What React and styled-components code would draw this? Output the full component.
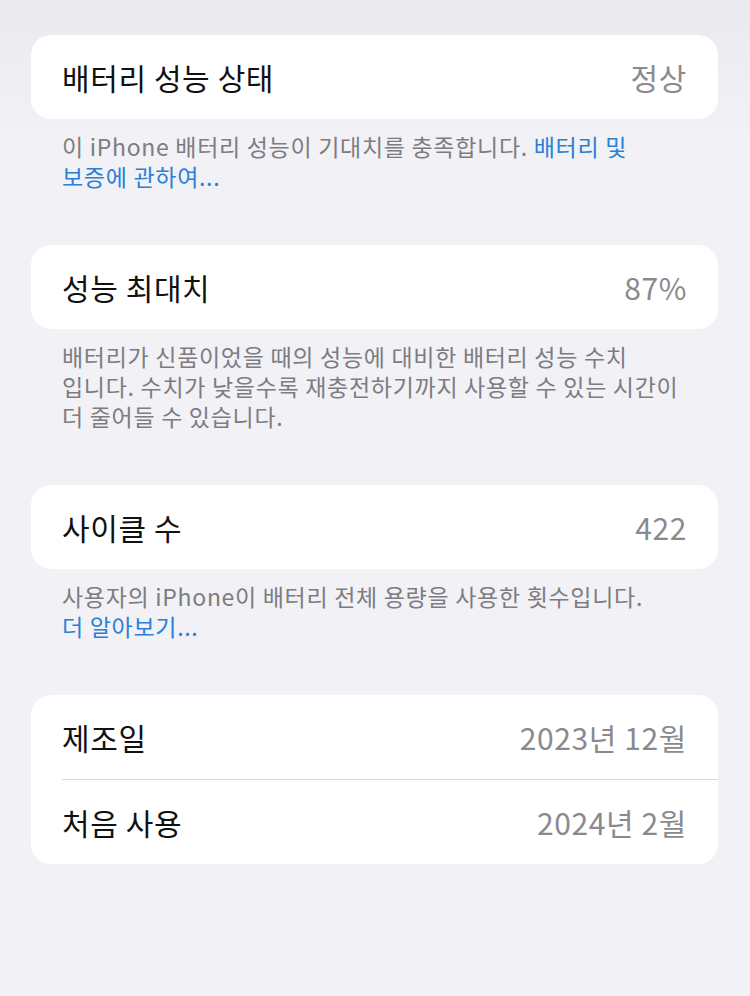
import React from 'react';
import styled, { createGlobalStyle } from 'styled-components';

const GlobalStyle = createGlobalStyle`
  html, body {
    margin: 0;
    padding: 0;
    background: #f1f1f6;
  }
  body {
    font-family: "Noto Sans CJK KR", "Noto Sans", sans-serif;
    -webkit-font-smoothing: antialiased;
  }
`;

const Page = styled.div`
  min-height: 996px;
  box-sizing: border-box;
  padding: 35px 32px 0 31px;
  background: linear-gradient(to bottom, #e9e9ee 0px, #f1f1f6 140px, #f1f1f6 100%);
`;

const Section = styled.section`
  margin-bottom: 54px;
`;

const Card = styled.div`
  background: #ffffff;
  border-radius: 20px;
  overflow: hidden;
`;

const Row = styled.div`
  display: flex;
  align-items: center;
  justify-content: space-between;
  height: 84px;
  padding: 0 31px;
  box-sizing: border-box;
`;

const Divider = styled.div`
  height: 1px;
  margin-left: 31px;
  background: #dcdce0;
`;

const Label = styled.span`
  font-size: 30px;
  color: #111111;
  letter-spacing: 0.6px;
`;

const Value = styled.span`
  font-size: 30px;
  color: #8a8a8e;
  letter-spacing: 0.6px;
`;

const Footer = styled.p`
  margin: 0;
  padding: 12px 31px 0 31px;
  font-size: 23px;
  line-height: 30px;
  color: #7c7c81;
  letter-spacing: 0.7px;
  white-space: nowrap;
`;

const Link = styled.a`
  color: #2a80d6;
  text-decoration: none;
`;

export default function App() {
  return (
    <>
      <GlobalStyle />
      <Page>
        <Section>
          <Card>
            <Row>
              <Label>배터리 성능 상태</Label>
              <Value>정상</Value>
            </Row>
          </Card>
          <Footer>
            이 iPhone 배터리 성능이 기대치를 충족합니다. <Link>배터리 및</Link>
            <br />
            <Link>보증에 관하여...</Link>
          </Footer>
        </Section>

        <Section>
          <Card>
            <Row>
              <Label>성능 최대치</Label>
              <Value>87%</Value>
            </Row>
          </Card>
          <Footer>
            배터리가 신품이었을 때의 성능에 대비한 배터리 성능 수치
            <br />
            입니다. 수치가 낮을수록 재충전하기까지 사용할 수 있는 시간이
            <br />
            더 줄어들 수 있습니다.
          </Footer>
        </Section>

        <Section>
          <Card>
            <Row>
              <Label>사이클 수</Label>
              <Value>422</Value>
            </Row>
          </Card>
          <Footer>
            사용자의 iPhone이 배터리 전체 용량을 사용한 횟수입니다.
            <br />
            <Link>더 알아보기...</Link>
          </Footer>
        </Section>

        <Section>
          <Card>
            <Row>
              <Label>제조일</Label>
              <Value>2023년 12월</Value>
            </Row>
            <Divider />
            <Row>
              <Label>처음 사용</Label>
              <Value>2024년 2월</Value>
            </Row>
          </Card>
        </Section>
      </Page>
    </>
  );
}
